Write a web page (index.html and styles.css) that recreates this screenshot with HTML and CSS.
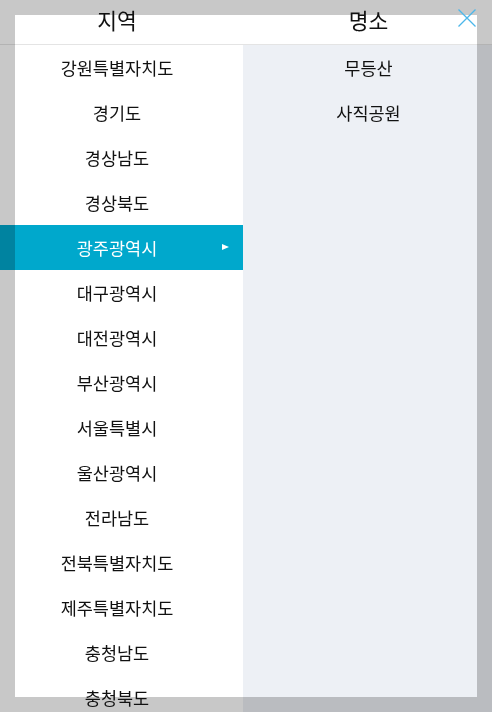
FILE: index.html
```html
<!DOCTYPE html>
<html lang="ko">
<head>
<meta charset="utf-8">
<title>지역 / 명소</title>
<link rel="stylesheet" href="styles.css">
</head>
<body>
<div class="app">
  <header class="head">
    <div class="head-cell head-left"><span class="txt">지역</span></div>
    <div class="head-cell head-right"><span class="txt">명소</span></div>
    <button class="close" type="button" aria-label="닫기">
      <svg width="18" height="18" viewBox="0 0 18 18"><path d="M0.5 0.5 L17.5 17.5 M17.5 0.5 L0.5 17.5" stroke="#4bb7ea" stroke-width="1.3" fill="none"/></svg>
    </button>
  </header>
  <div class="cols">
    <ul class="list regions">
      <li class="item"><span class="txt">강원특별자치도</span></li>
      <li class="item"><span class="txt">경기도</span></li>
      <li class="item"><span class="txt">경상남도</span></li>
      <li class="item"><span class="txt">경상북도</span></li>
      <li class="item active"><span class="txt">광주광역시</span><span class="arrow"></span></li>
      <li class="item"><span class="txt">대구광역시</span></li>
      <li class="item"><span class="txt">대전광역시</span></li>
      <li class="item"><span class="txt">부산광역시</span></li>
      <li class="item"><span class="txt">서울특별시</span></li>
      <li class="item"><span class="txt">울산광역시</span></li>
      <li class="item"><span class="txt">전라남도</span></li>
      <li class="item"><span class="txt">전북특별자치도</span></li>
      <li class="item"><span class="txt">제주특별자치도</span></li>
      <li class="item"><span class="txt">충청남도</span></li>
      <li class="item"><span class="txt">충청북도</span></li>
    </ul>
    <ul class="list places">
      <li class="item"><span class="txt">무등산</span></li>
      <li class="item"><span class="txt">사직공원</span></li>
    </ul>
  </div>
</div>
<div class="spotlight"></div>
</body>
</html>
```
FILE: styles.css
```css
* { box-sizing: border-box; }
html, body {
  margin: 0;
  padding: 0;
  height: 712px;
  overflow: hidden;
  background: #fff;
}
body {
  font-family: "Noto Sans CJK KR", "Noto Sans", sans-serif;
  color: #111;
}
.app {
  display: flex;
  flex-direction: column;
  height: 712px;
}
.head {
  position: relative;
  display: grid;
  grid-template-columns: 243px 1fr;
  height: 45px;
  border-bottom: 1px solid #e4e4e4;
  background: #fff;
}
.head-cell {
  display: flex;
  align-items: center;
  justify-content: center;
  font-size: 21.5px;
  line-height: 40px;
  height: 40px;
}
.head-left { padding-right: 9px; }
.head-right { padding-left: 2px; }
.close {
  position: absolute;
  top: 9px;
  right: 16px;
  width: 18px;
  height: 18px;
  padding: 0;
  border: 0;
  background: none;
  z-index: 3;
}
.close svg { display: block; }
.cols {
  flex: 1;
  display: grid;
  grid-template-columns: 243px 1fr;
  min-height: 0;
}
.list {
  list-style: none;
  margin: 0;
  padding: 0;
}
.regions { background: #fff; }
.places { background: #edf0f5; }
.item {
  position: relative;
  display: flex;
  align-items: center;
  justify-content: center;
  height: 45px;
  font-size: 17.5px;
  padding-bottom: 1px;
}
.regions .item { padding-right: 9px; }
.places .item { padding-left: 2px; }
.item.active {
  background: #00a8cc;
  color: #fff;
}
.txt {
  position: relative;
  z-index: 2;
}
.arrow {
  position: absolute;
  right: 14px;
  top: 19px;
  width: 0;
  height: 0;
  border-top: 3.5px solid transparent;
  border-bottom: 3.5px solid transparent;
  border-left: 7px solid #fff;
  z-index: 2;
}
.spotlight {
  position: fixed;
  left: 15px;
  top: 15px;
  width: 462px;
  height: 682px;
  box-shadow: 0 0 0 2000px rgba(0, 0, 0, 0.215);
  pointer-events: none;
  z-index: 1;
}
```
